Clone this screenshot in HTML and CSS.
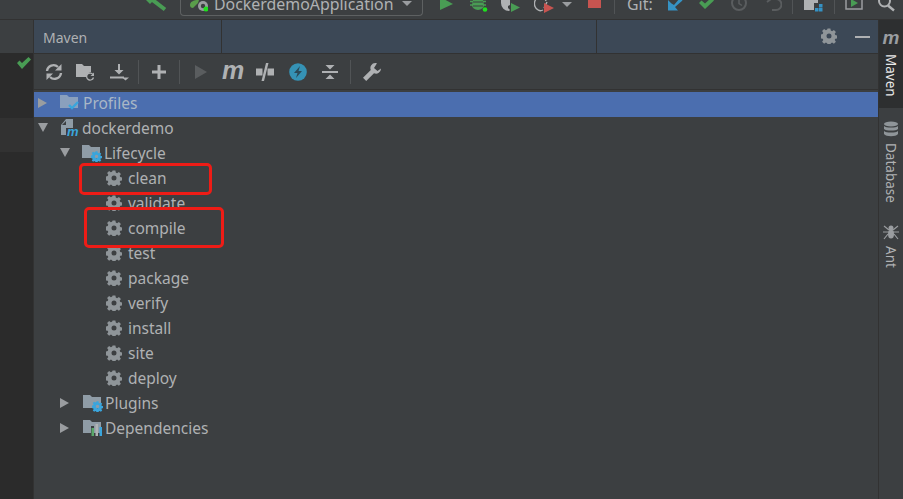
FILE: index.html
```html
<!DOCTYPE html>
<html lang="en">
<head>
<meta charset="utf-8">
<title>Maven</title>
<link rel="stylesheet" href="styles.css">
</head>
<body>
<svg class="defs" width="0" height="0">
  <defs>
    <symbol id="gear" viewBox="0 0 16 16">
      <path fill="#8f9599" fill-rule="evenodd" d="M6.600.5h2.800l.4 2.100 1.300.6 1.800-1.200 2 2-1.200 1.800.6 1.300 2.100.4v2.800l-2.100.4-.6 1.300 1.200 1.800-2 2-1.800-1.200-1.300.6-.4 2.100H6.600l-.4-2.100-1.300-.6-1.800 1.200-2-2 1.200-1.800-.6-1.300-2.100-.4V6.500l2.100-.4.6-1.300-1.200-1.800 2-2 1.800 1.200 1.300-.6zM8 5.500a2.500 2.500 0 1 0 0 5 2.500 2.500 0 0 0 0-5z"/>
    </symbol>
    <symbol id="folder" viewBox="0 0 18 16">
      <path fill="#8f9ca6" d="M0 1h7l2 2h9v11H0z"/>
    </symbol>
    <symbol id="cog-blue" viewBox="0 0 16 16">
      <path fill="#3aa5dc" fill-rule="evenodd" d="M6.600.5h2.800l.4 2.100 1.300.6 1.800-1.200 2 2-1.200 1.800.6 1.300 2.100.4v2.800l-2.100.4-.6 1.300 1.200 1.800-2 2-1.800-1.200-1.300.6-.4 2.100H6.600l-.4-2.100-1.300-.6-1.800 1.200-2-2 1.200-1.800-.6-1.300-2.100-.4V6.500l2.100-.4.6-1.300-1.200-1.800 2-2 1.800 1.200 1.300-.6zM8 5.500a2.500 2.500 0 1 0 0 5 2.500 2.500 0 0 0 0-5z"/>
    </symbol>
  </defs>
</svg>

<header class="topbar">
  <div class="topbar-left">
    <svg class="tb-hammer" width="22" height="14" viewBox="0 0 22 14"><path d="M5-2l15 11.500" stroke="#499c54" stroke-width="4" fill="none"/><path d="M1 0h8L5 4z" fill="#499c54"/></svg>
    <div class="run-config">
      <svg width="18" height="15" viewBox="0 0 18 15"><path d="M0 5C0 2 3 0 9 0L8 3 3 8C1 8 0 7 0 5z" fill="#5a9e4b"/><circle cx="13" cy="6" r="5" fill="#9a9da0"/><circle cx="13" cy="6" r="2.200" fill="#3c3f41"/><circle cx="16" cy="9" r="2.500" fill="#1fe01f"/></svg>
      <span class="run-name">DockerdemoApplication</span>
      <span class="caret"></span>
    </div>
    <svg class="tb-play" width="13" height="14" viewBox="0 0 13 14"><path d="M0-3l13 7L0 10z" fill="#499c54"/></svg>
    <svg class="tb tb-bug" width="20" height="14" viewBox="0 0 20 14"><path d="M3 0h10l1 5a6 5 0 0 1-12 0z" fill="#499c54"/><path d="M3 2h10M3 6h10" stroke="#3c3f41" stroke-width="1"/><path d="M0 1.500h3M13 1.500h3M0 5h3M13 5h3" stroke="#499c54" stroke-width="1.300"/><circle cx="15" cy="9.500" r="2.300" fill="#1fe01f"/></svg>
    <svg class="tb tb-cov" width="20" height="14" viewBox="0 0 20 14"><path d="M1 0h9v5l-2 1v2l2 2-1 1a8 8 0 0 1-8-8z" fill="#afb1b3"/><path d="M11 3l9 4.500L11 12z" fill="#499c54"/></svg>
    <svg class="tb tb-prof" width="20" height="14" viewBox="0 0 20 14"><path d="M10 8l3-6M9 10a6 7 0 1 1 3-9" fill="none" stroke="#afb1b3" stroke-width="1.400"/><path d="M10 3l10 5-10 5z" fill="#c75450"/></svg>
    <span class="caret caret-sm"></span>
    <span class="stop"></span>
    <span class="tb-sep s1"></span>
    <span class="git">Git:</span>
    <svg class="tb-g a" width="16" height="14" viewBox="0 0 16 14"><path d="M13-2l2.500 2.500L8 7l3 3.500H1V0l3.500 3.500L7 5z" fill="#3592c4"/></svg>
    <svg class="tb-g b" width="16" height="14" viewBox="0 0 16 14"><path d="M0 3l2.500-2.500L6 3.500 12-2l3 2.500L6 9z" fill="#499c54"/></svg>
    <svg class="tb-g c" width="18" height="14" viewBox="0 0 18 14"><circle cx="9" cy="3" r="7" fill="none" stroke="#5a5d5f" stroke-width="2"/><path d="M9-1v4.500l3 2" fill="none" stroke="#5a5d5f" stroke-width="1.500"/></svg>
    <svg class="tb-g d" width="16" height="14" viewBox="0 0 16 14"><path d="M9-1h1a5 5 0 0 1 0 11H6M1 2l4-3" fill="none" stroke="#5a5d5f" stroke-width="2"/></svg>
    <span class="tb-sep s2"></span>
    <svg class="tb-g e" width="19" height="14" viewBox="0 0 19 14"><path d="M0 0h14v3h-4v7H0z" fill="#afb1b3"/><path d="M11 8h3.500v3.500H11zM15 8h3.500v3.500H15zM15 4h3.500v3.500H15z" fill="#3592c4"/></svg>
    <span class="tb-sep s3"></span>
    <svg class="tb-g f" width="18" height="14" viewBox="0 0 18 14"><path d="M1-2h16v11H1z" fill="none" stroke="#9a9da0" stroke-width="1.500"/><path d="M6-1l7 4-7 4z" fill="#499c54"/></svg>
    <svg class="tb-g g" width="18" height="14" viewBox="0 0 18 14"><circle cx="6.500" cy="1" r="5.500" fill="none" stroke="#afb1b3" stroke-width="2"/><path d="M10 5.500l6 5" stroke="#afb1b3" stroke-width="2.400"/></svg>
  </div>
</header>

<div class="workspace">
  <aside class="gutter">
    <svg class="gutter-check" width="14" height="12" viewBox="0 0 14 12"><path d="M0 6l2.500-2.500L5 6l6.500-6L14 2.500 5 12z" fill="#499c54"/></svg>
    <div class="gutter-line"></div>
  </aside>

  <main class="panel">
    <div class="panel-head">
      <span class="panel-title">Maven</span>
      <span class="head-divider d1"></span>
      <span class="head-divider d2"></span>
      <svg class="head-gear" width="16" height="16"><use href="#gear"/></svg>
      <span class="head-min"></span>
    </div>

    <div class="tools">
      <svg class="tool t-reload" width="18" height="18" viewBox="0 0 18 18"><path d="M2 8a6.500 6.500 0 0 1 11-4M16 10a6.500 6.500 0 0 1-11 4" fill="none" stroke="#afb1b3" stroke-width="2.400"/><path d="M16.500 1v6.500H10zM1.500 17v-6.500H8z" fill="#afb1b3"/></svg>
      <svg class="tool t-folder" width="20" height="18" viewBox="0 0 20 18"><path d="M0 1h6l2 2h7v6a5 5 0 0 0-4 5H0z" fill="#afb1b3"/><path d="M17 11.500a3.500 3.500 0 1 0 .5 3" fill="none" stroke="#afb1b3" stroke-width="1.300"/><path d="M18 9.500v3.500h-3.500z" fill="#afb1b3"/></svg>
      <svg class="tool t-down" width="20" height="18" viewBox="0 0 20 18"><path d="M8 1h2v6h3.500L9 11.500 4.500 7H8zM0 13.500h14v2H0z" fill="#afb1b3"/><path d="M12 14.500h7l-3.500 3z" fill="#afb1b3"/></svg>
      <span class="tool-sep"></span>
      <svg class="tool t-plus" width="14" height="14" viewBox="0 0 14 14"><path d="M5.500 0h3v5.500H14v3H8.500V14h-3V8.500H0v-3h5.500z" fill="#afb1b3"/></svg>
      <span class="tool-sep sep2"></span>
      <svg class="tool t-run" width="14" height="14" viewBox="0 0 14 14"><path d="M1 0l12 7-12 7z" fill="#5a5d5f"/></svg>
      <span class="tool t-m">m</span>
      <svg class="tool t-skip" width="18" height="18" viewBox="0 0 18 18"><path d="M0 5.500h6.500v7H0zM11.500 5.500H18v7h-6.500z" fill="#afb1b3"/><path d="M10 0h2.500L8 18H5.500z" fill="#afb1b3"/></svg>
      <svg class="tool t-bolt" width="18" height="18" viewBox="0 0 18 18"><circle cx="9" cy="9" r="8.800" fill="#3592b5"/><path d="M11 3L5 10h3.500L7 15l6-7H9.500z" fill="#2b4a58"/></svg>
      <svg class="tool t-collapse" width="16" height="16" viewBox="0 0 16 16"><path d="M0 7h16v2H0zM3.500 1h9L8 5.500zM8 10.500l4.500 4.500h-9z" fill="#afb1b3"/></svg>
      <span class="tool-sep sep3"></span>
      <svg class="tool t-wrench" width="18" height="18" viewBox="0 0 18 18"><path d="M12.500 0a5 5 0 0 0-4.700 7L0 14.800 3.200 18 11 10.200A5 5 0 0 0 18 5.500L14.500 8 11 5l3-4.700z" fill="#afb1b3"/></svg>
    </div>

    <ul class="tree">
      <li class="row lvl1 selected">
        <span class="arrow right"></span>
        <svg class="ico-l1" width="20" height="18" viewBox="0 0 20 18"><path d="M0 1h7l2 2h9v11H0z" fill="#8aa0bd"/><path d="M9 11l3 3 6-6" fill="none" stroke="#3aa5dc" stroke-width="2.400"/></svg>
        <span class="label sel-label">Profiles</span>
      </li>
      <li class="row lvl1">
        <span class="arrow down"></span>
        <svg class="ico-l1" width="20" height="18" viewBox="0 0 20 18"><path d="M2 6l5-6h7v9H7v7H2z" fill="#8f9ca6"/><path d="M7 2v4H3z" fill="#3c3f41"/><text x="8" y="16.500" class="m-badge">m</text></svg>
        <span class="label">dockerdemo</span>
      </li>
      <li class="row lvl2">
        <span class="arrow down"></span>
        <svg class="ico-l2" width="22" height="18" viewBox="0 0 22 18"><use href="#folder" width="18" height="16"/><use href="#cog-blue" x="9" y="7" width="11" height="11"/></svg>
        <span class="label">Lifecycle</span>
      </li>
      <li class="row lvl3"><svg class="gear" width="16" height="16"><use href="#gear"/></svg><span class="label">clean</span></li>
      <li class="row lvl3"><svg class="gear" width="16" height="16"><use href="#gear"/></svg><span class="label">validate</span></li>
      <li class="row lvl3"><svg class="gear" width="16" height="16"><use href="#gear"/></svg><span class="label">compile</span></li>
      <li class="row lvl3"><svg class="gear" width="16" height="16"><use href="#gear"/></svg><span class="label">test</span></li>
      <li class="row lvl3"><svg class="gear" width="16" height="16"><use href="#gear"/></svg><span class="label">package</span></li>
      <li class="row lvl3"><svg class="gear" width="16" height="16"><use href="#gear"/></svg><span class="label">verify</span></li>
      <li class="row lvl3"><svg class="gear" width="16" height="16"><use href="#gear"/></svg><span class="label">install</span></li>
      <li class="row lvl3"><svg class="gear" width="16" height="16"><use href="#gear"/></svg><span class="label">site</span></li>
      <li class="row lvl3"><svg class="gear" width="16" height="16"><use href="#gear"/></svg><span class="label">deploy</span></li>
      <li class="row lvl2">
        <span class="arrow right"></span>
        <svg class="ico-l2" width="22" height="18" viewBox="0 0 22 18"><use href="#folder" width="18" height="16"/><use href="#cog-blue" x="9" y="7" width="11" height="11"/></svg>
        <span class="label">Plugins</span>
      </li>
      <li class="row lvl2">
        <span class="arrow right"></span>
        <svg class="ico-l2" width="22" height="18" viewBox="0 0 22 18"><use href="#folder" width="18" height="16"/><path d="M8 7h3v10H8z" fill="#3c3f41"/><path d="M8.500 9h2.500v8H8.500z" fill="#59a869"/><path d="M12.500 5h2.500v12h-2.500z" fill="#b0b3b5"/><path d="M16.500 8H19v9h-2.500z" fill="#3aa5dc"/></svg>
        <span class="label">Dependencies</span>
      </li>
    </ul>

    <span class="callout c-clean"></span>
    <span class="callout c-compile"></span>
  </main>

  <nav class="rail">
    <div class="rail-tab active">
      <span class="rail-m">m</span>
      <span class="rail-text">Maven</span>
    </div>
    <div class="rail-tab db">
      <svg width="16" height="16" viewBox="0 0 16 16"><ellipse cx="8" cy="3" rx="7" ry="2.500" fill="#8f9599"/><path d="M1 5c2 2 12 2 14 0v3c-2 2-12 2-14 0zM1 10c2 2 12 2 14 0v3c-2 3-12 3-14 0z" fill="#8f9599"/></svg>
      <span class="rail-text dim">Database</span>
    </div>
    <div class="rail-tab ant">
      <svg width="16" height="16" viewBox="0 0 16 16"><circle cx="8" cy="4" r="2.500" fill="#9a9da0"/><ellipse cx="8" cy="10" rx="3" ry="4.500" fill="#9a9da0"/><path d="M1 2l5 4M15 2l-5 4M0 8h16M1 15l4-5M15 15l-4-5" stroke="#9a9da0" stroke-width="1.200"/></svg>
      <span class="rail-text dim">Ant</span>
    </div>
  </nav>
</div>
</body>
</html>
```
FILE: styles.css
```css
* { box-sizing: border-box; }
html, body { margin: 0; padding: 0; }
body {
  width: 903px; height: 499px; overflow: hidden;
  background: #3c3f41; color: #afb1b3;
  font-family: "Noto Sans", "Open Sans", sans-serif;
  font-size: 15px;
  display: flex; flex-direction: column;
}
.defs { position: absolute; }

/* top toolbar */
.topbar { height: 20px; flex: none; background: #3c3f41; overflow: hidden; border-bottom: 1px solid #323232; }
.topbar-left { display: flex; align-items: flex-start; height: 19px; padding-left: 145px; }
.tb-hammer { flex: none; }
.run-config {
  display: flex; align-items: flex-start; gap: 6px; flex: none;
  height: 16px; width: 243px; margin-left: 13px; padding-left: 9px;
  border: 1px solid #5e6162; border-top: 0; border-radius: 0 0 4px 4px;
}
.run-name { font-size: 15.900px; line-height: 1; margin-top: -3px; white-space: nowrap; }
.caret { flex: none; width: 0; height: 0; border: 5px solid transparent; border-top: 5px solid #9a9da0; border-bottom: 0; margin: 1px 0 0 3px; }
.caret-sm { margin: 2px 0 0 8px; }
.tb-play { margin-left: 17px; flex: none; }
.tb { flex: none; }
.tb-bug { margin-left: 17px; }
.tb-cov { margin-left: 10px; }
.tb-prof { margin-left: 14px; }
.stop { flex: none; width: 13px; height: 8px; background: #c75450; margin-left: 16px; }
.tb-sep { flex: none; width: 1px; height: 14px; background: #515456; }
.s1 { margin-left: 13px; }
.s2 { margin-left: 10px; }
.s3 { margin-left: 11px; }
.git { flex: none; font-size: 15.900px; line-height: 1; margin: -3px 0 0 12px; width: 25px; white-space: nowrap; }
.tb-g { flex: none; }
.tb-g.a { margin-left: 15px; }
.tb-g.b { margin-left: 16px; }
.tb-g.c { margin-left: 15px; }
.tb-g.d { margin-left: 18px; }
.tb-g.e { margin-left: 11px; }
.tb-g.f { margin-left: 10px; }
.tb-g.g { margin-left: 15px; }

.workspace { flex: 1; display: flex; min-height: 0; }

/* editor gutter */
.gutter { width: 34px; flex: none; position: relative; border-right: 1px solid #323232; background: linear-gradient(#3c3f41 0 33px, #2b2b2b 33px); }
.gutter-check { position: absolute; left: 17px; top: 37px; }
.gutter-line { position: absolute; left: 0; right: 0; top: 98px; height: 34px; background: #323232; }

/* tool window */
.panel { flex: 1; position: relative; display: flex; flex-direction: column; min-width: 0; }
.panel-head { height: 34px; flex: none; background: #3c4856; border-bottom: 1px solid #323232; display: flex; align-items: center; padding: 2px 0 0 9px; position: relative; }
.panel-title { font-size: 14px; color: #afb1b3; }
.head-divider { position: absolute; top: 0; bottom: 0; width: 1px; background: #323232; }
.d1 { left: 187px; }
.d2 { left: 562px; }
.head-gear { position: absolute; left: 787px; top: 8px; }
.head-min { position: absolute; left: 821px; top: 16px; width: 15px; height: 2px; background: #afb1b3; }

.tools { height: 36px; flex: none; display: flex; align-items: center; padding-left: 11px; border-bottom: 1px solid #323232; }
.tool { flex: none; }
.t-folder { margin-left: 13px; }
.t-down { margin-left: 14px; }
.tool-sep { width: 1px; height: 24px; background: #515456; margin-left: 8px; flex: none; }
.t-plus { margin-left: 13px; }
.sep2 { margin-left: 13px; }
.t-run { margin-left: 14px; }
.t-m { margin: -3px 0 0 14px; font: italic 700 25px/18px "Liberation Sans", sans-serif; color: #afb1b3; height: 18px; width: 22px; }
.t-skip { margin-left: 12px; }
.t-bolt { margin-left: 15px; }
.t-collapse { margin-left: 15px; }
.sep3 { margin-left: 12px; }
.t-wrench { margin-left: 12px; }

/* tree */
.tree { list-style: none; margin: 0; padding: 0; display: flex; flex-direction: column; }
.row { height: 25px; display: flex; align-items: center; }
.selected { background: linear-gradient(transparent 2px, #4b6eaf 2px); box-shadow: 0 2px 0 #4b6eaf; }
.lvl1 { padding-left: 4px; }
.lvl2 { padding-left: 26px; }
.lvl3 { padding-left: 72px; }
.arrow { width: 0; height: 0; flex: none; }
.arrow.right { border-left: 9px solid #9a9da0; border-top: 5.500px solid transparent; border-bottom: 5.500px solid transparent; }
.arrow.down { border-top: 9px solid #9a9da0; border-left: 5.500px solid transparent; border-right: 5.500px solid transparent; }
.lvl1 .arrow.right { margin-right: 13px; }
.lvl1 .arrow.down { margin-right: 11px; }
.lvl2 .arrow.right { margin-right: 14px; }
.lvl2 .arrow.down { margin-right: 12px; }
.ico-l1 { margin-right: 3px; flex: none; }
.ico-l2 { flex: none; }
.gear { margin-right: 6px; flex: none; }
.label { font-size: 15.500px; color: #afb1b3; white-space: nowrap; }
.sel-label { color: #a9b7c6; }
.m-badge { font: italic 700 13px "Liberation Sans", sans-serif; fill: #3aa5dc; }

/* annotations drawn over the screenshot */
.callout { position: absolute; border: 3px solid #ee1c16; border-radius: 5px; }
.c-clean { left: 45px; top: 143px; width: 133px; height: 32px; }
.c-compile { left: 50px; top: 187px; width: 140px; height: 41px; }

/* right rail */
.rail { width: 25px; flex: none; background: #3c3f41; border-left: 1px solid #323232; display: flex; flex-direction: column; }
.rail-tab { display: flex; flex-direction: column; align-items: center; }
.rail-tab.active { background: #2d2f30; height: 88px; padding-top: 10px; }
.rail-tab.db { height: 116px; padding-top: 13px; }
.rail-tab.ant { padding-top: 0; }
.rail-m { font: italic 700 19px/16px "Liberation Sans", sans-serif; color: #9a9da0; height: 16px; }
.rail-text { writing-mode: vertical-rl; font-size: 13.500px; color: #e8e8e8; margin-top: 8px; line-height: 14px; }
.rail-text.dim { color: #afb1b3; margin-top: 6px; }
```
